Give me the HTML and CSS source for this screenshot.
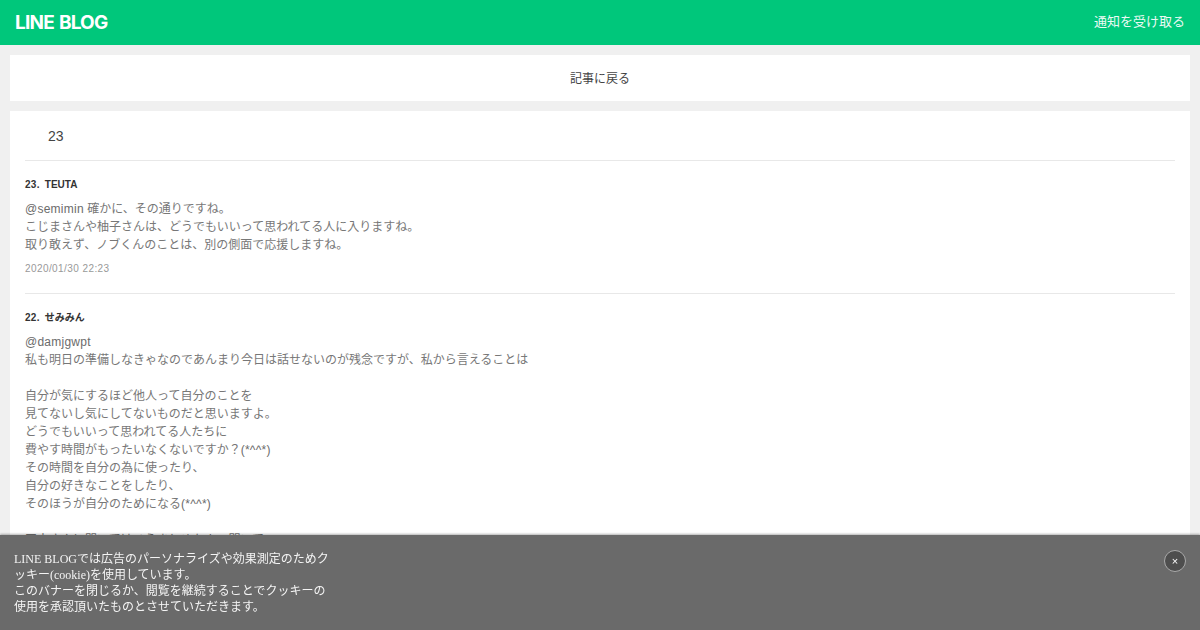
FILE: index.html
```html
<!DOCTYPE html>
<html lang="ja">
<head>
<meta charset="utf-8">
<title>LINE BLOG</title>
<link rel="stylesheet" href="styles.css">
</head>
<body>
<header class="topbar">
  <div class="logo"><span>LINE</span><span>BLOG</span></div>
  <a class="notify">通知を受け取る</a>
</header>
<main class="page">
  <a class="back">記事に戻る</a>
  <section class="comments">
    <h2 class="count">23</h2>
    <article class="comment">
      <div class="name"><span class="num">23.</span>TEUTA</div>
      <p class="body"><span class="lat">@semimin</span> 確かに、その通りですね。<br>こじまさんや柚子さんは、どうでもいいって思われてる人に入りますね。<br>取り敢えず、ノブくんのことは、別の側面で応援しますね。</p>
      <div class="date">2020/01/30 22:23</div>
    </article>
    <article class="comment">
      <div class="name"><span class="num">22.</span>せみみん</div>
      <p class="body"><span class="lat">@damjgwpt</span><br>私も明日の準備しなきゃなのであんまり今日は話せないのが残念ですが、私から言えることは<br><br>自分が気にするほど他人って自分のことを<br>見てないし気にしてないものだと思いますよ。<br>どうでもいいって思われてる人たちに<br>費やす時間がもったいなくないですか？<span class="lat">(*^^*)</span><br>その時間を自分の為に使ったり、<br>自分の好きなことをしたり、<br>そのほうが自分のためになる<span class="lat">(*^^*)</span><br><br>田中さんに聞いてはこうまとめた人の聞いて</p>
    </article>
  </section>
</main>
<aside class="cookie">
  <p class="cookie-text">LINE BLOGでは広告のパーソナライズや効果測定のためクッキー(cookie)を使用しています。<br>このバナーを閉じるか、閲覧を継続することでクッキーの使用を承認頂いたものとさせていただきます。</p>
  <button class="close" aria-label="閉じる">×</button>
</aside>
</body>
</html>
```
FILE: styles.css
```css
* { box-sizing: border-box; }
html, body { margin: 0; height: 630px; overflow: hidden; }
body {
  background: #f0f0f0;
  font-family: "Liberation Sans", "Noto Sans CJK JP", sans-serif;
  color: #333;
}
.topbar {
  height: 45px;
  background: #00c77b;
  display: flex;
  align-items: center;
  justify-content: space-between;
  padding: 0 15px;
}
.logo {
  display: flex;
  gap: 5px;
  font-family: "Inter", "Liberation Sans", sans-serif;
  font-weight: 700;
  font-size: 19px;
  letter-spacing: -0.8px;
  color: #fff;
}
.notify { color: #fff; font-size: 13px; line-height: 15px; margin-top: -2px; opacity: .92; }
.page { padding: 10px; display: flex; flex-direction: column; gap: 10px; }
.back {
  height: 46px;
  padding-bottom: 2px;
  background: #fff;
  display: flex;
  align-items: center;
  justify-content: center;
  font-size: 12px;
  color: #444;
}
.comments { background: #fff; padding: 0 15px; }
.count {
  margin: 0;
  height: 50px;
  padding-left: 23px;
  display: flex;
  align-items: center;
  font-weight: 400;
  font-size: 14px;
  color: #444;
  border-bottom: 1px solid #e8e8e8;
}
.comment { padding: 18px 0 17px; border-bottom: 1px solid #e8e8e8; }
.name { font-size: 10px; font-weight: 700; line-height: 12px; color: #333; }
.num { margin-right: 5px; letter-spacing: 0.3px; }
.body { margin: 9px 0 0; font-size: 12px; line-height: 18px; color: #777; }
.lat { letter-spacing: 0.25px; color: #6b6b6b; }
.date { margin-top: 8px; font-size: 10px; line-height: 14px; letter-spacing: 0.42px; color: #999; }
.cookie {
  position: fixed;
  left: 0; right: 0; bottom: 0;
  height: 95px;
  background: #6a6a6a;
  box-shadow: 0 -1px 2px rgba(0,0,0,.3);
  padding: 16px 14px;
  display: flex;
  justify-content: space-between;
  align-items: flex-start;
}
.cookie-text {
  margin: 0;
  width: 320px;
  font-family: "Liberation Serif", "Noto Sans CJK JP", serif;
  font-size: 12px;
  line-height: 16px;
  color: #f4f4f4;
}
.close {
  width: 22px;
  height: 22px;
  margin-top: -1px;
  border-radius: 50%;
  padding: 0;
  background: #4e4e4e;
  border: 1px solid #aaa;
  color: #fff;
  font-size: 11px;
  line-height: 20px;
  font-family: "Liberation Sans", sans-serif;
}
```
